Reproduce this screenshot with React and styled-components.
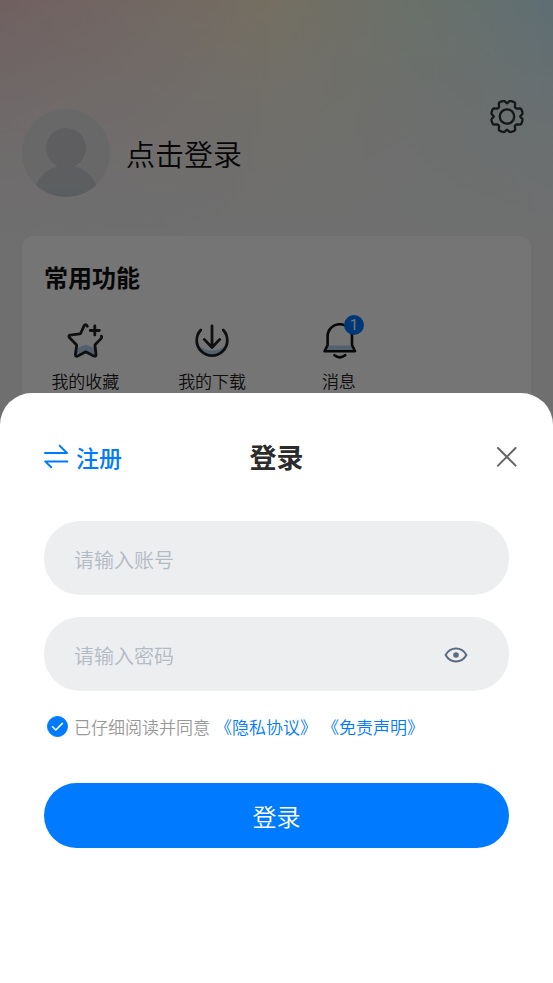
import React, { useState } from 'react';
import styled, { createGlobalStyle } from 'styled-components';

const FEATURES = [
    { key: 'favorite', label: '我的收藏', icon: <StarIcon /> },
    { key: 'download', label: '我的下载', icon: <DownloadIcon /> },
    { key: 'message', label: '消息', icon: <BellIcon />, count: 1 },
];

const App = () => {
    const [account, setAccount] = useState('');
    const [password, setPassword] = useState('');
    const [visible, setVisible] = useState(false);
    const [agreed, setAgreed] = useState(true);

    return (
        <>
            <GlobalStyle />
            <Page>
                <ProfileBar>
                    <ProfileButton type="button">
                        <Avatar />
                        <ProfileName>点击登录</ProfileName>
                    </ProfileButton>
                    <IconButton type="button" aria-label="设置">
                        <GearIcon />
                    </IconButton>
                </ProfileBar>
                <Card>
                    <CardTitle>常用功能</CardTitle>
                    <FeatureGrid>
                        {FEATURES.map((item) => (
                            <FeatureButton type="button" key={item.key}>
                                <FeatureIcon>
                                    {item.icon}
                                    {item.count && <Badge>{item.count}</Badge>}
                                </FeatureIcon>
                                {item.label}
                            </FeatureButton>
                        ))}
                    </FeatureGrid>
                </Card>
            </Page>
            <Mask>
                <Sheet role="dialog" aria-labelledby="sheet-title">
                    <SheetHeader>
                        <RegisterButton type="button">
                            <SwapIcon />
                            注册
                        </RegisterButton>
                        <SheetTitle id="sheet-title">登录</SheetTitle>
                        <CloseButton type="button" aria-label="关闭">
                            <CloseIcon />
                        </CloseButton>
                    </SheetHeader>
                    <Form onSubmit={(e) => e.preventDefault()}>
                        <Field>
                            <Input
                                aria-label="账号"
                                placeholder="请输入账号"
                                value={account}
                                onChange={(e) => setAccount(e.target.value)}
                            />
                        </Field>
                        <Field>
                            <Input
                                type={visible ? 'text' : 'password'}
                                aria-label="密码"
                                placeholder="请输入密码"
                                value={password}
                                onChange={(e) => setPassword(e.target.value)}
                            />
                            <IconButton type="button" aria-label="显示密码" onClick={() => setVisible(!visible)}>
                                <EyeIcon />
                            </IconButton>
                        </Field>
                        <Agreement>
                            <CheckSlot>
                                <Checkbox
                                    id="agree"
                                    type="checkbox"
                                    checked={agreed}
                                    onChange={(e) => setAgreed(e.target.checked)}
                                />
                                {agreed && <CheckIcon />}
                            </CheckSlot>
                            <label htmlFor="agree">已仔细阅读并同意</label>
                            <TermsLink href="#privacy">《隐私协议》</TermsLink>
                            <TermsLink href="#disclaimer">《免责声明》</TermsLink>
                        </Agreement>
                        <SubmitButton type="submit">登录</SubmitButton>
                    </Form>
                </Sheet>
            </Mask>
        </>
    );
};
export default App;

function Avatar() {
    return (
        <svg width="88" height="88" viewBox="0 0 88 88" aria-hidden="true">
            <defs>
                <clipPath id="avatar-clip">
                    <circle cx="44" cy="44" r="44" />
                </clipPath>
                <linearGradient id="avatar-body" x1="0" y1="0" x2="0" y2="1">
                    <stop offset="0" stopColor="#cccdd3" />
                    <stop offset="0.5" stopColor="#c6ccd1" />
                </linearGradient>
            </defs>
            <g clipPath="url(#avatar-clip)">
                <rect width="88" height="88" fill="#e4e3e4" />
                <circle cx="44" cy="39" r="20" fill="#cccdd3" />
                <path d="M34 54 Q37 57 33 59 L55 59 Q51 57 54 54Z" fill="#cccdd3" />
                <circle cx="44" cy="89" r="33" fill="url(#avatar-body)" />
            </g>
        </svg>
    );
}

// four pairs of rounded teeth: a narrow notch inside each pair, a wide one between pairs
function gearOutline(cx, cy, radius) {
    const points = [];
    for (let deg = 0; deg < 360; deg += 3) {
        const inPair = ((deg + 45) % 90) - 45;
        const between = (deg % 90) - 45;
        const r = radius - 2.8 * Math.exp(-((inPair / 7) ** 2)) - 3.8 * Math.exp(-((between / 11) ** 4));
        const rad = (deg * Math.PI) / 180;
        points.push(`${(cx + r * Math.cos(rad)).toFixed(2)} ${(cy + r * Math.sin(rad)).toFixed(2)}`);
    }
    return `M${points.join('L')}Z`;
}

function GearIcon() {
    return (
        <svg width="34" height="34" viewBox="0 0 34 34" fill="none" stroke="#303438" strokeWidth="2.3" strokeLinejoin="round" aria-hidden="true">
            <path d={gearOutline(17, 16.5, 16)} />
            <circle cx="17" cy="16.5" r="7.2" />
        </svg>
    );
}

function StarIcon() {
    return (
        <svg width="36" height="36" viewBox="0 0 36 36" fill="none" stroke="#222222" strokeWidth="2.8" strokeLinecap="round" strokeLinejoin="round" aria-hidden="true">
            <path d="M10.5 25 L18.5 21.5 L27.5 25 L28 31.5 L18.7 27.5 L9.5 31.5Z" fill="#b5d4f2" stroke="none" />
            <path d="M20.3 3.2 Q18.7 .2 17.2 2.6 L13.8 10 Q13.5 10.7 12.7 10.8 L3 12.2 Q1 12.8 2.4 14.6 L9.2 21.4 Q9.7 22 9.6 22.8 L8.4 31.6 Q8.5 34 10.8 33 L18.7 28.8 L26.8 33 Q29.2 33.8 29 31.4 L28 22.6 Q28 21.8 28.5 21.3 L34 15.6 Q35.2 14.2 34.4 13.2" />
            <path d="M27.8 3v9M23.3 7.5h9" />
        </svg>
    );
}

function DownloadIcon() {
    return (
        <svg width="36" height="36" viewBox="0 0 36 36" fill="none" stroke="#222222" strokeWidth="2.8" strokeLinecap="round" strokeLinejoin="round" aria-hidden="true">
            <path d="M3 19 Q7 27.5 18 27.5 T33 19 Q31 32.5 18 32.5 T3 19Z" fill="#b5d4f2" stroke="none" />
            <path d="M6.8 7 A15.3 15.3 0 1 0 29.2 7" />
            <path d="M18 3v21.5M10.3 16.4L18 24.5l7.7-8.1" />
        </svg>
    );
}

function BellIcon() {
    return (
        <svg width="36" height="36" viewBox="0 0 36 36" fill="none" stroke="#111111" strokeWidth="2.6" strokeLinecap="round" strokeLinejoin="round" aria-hidden="true">
            <path d="M7 22.5h24l2 4.5H5z" fill="#b5d4f2" stroke="none" />
            <path d="M3.6 28.2 L6.6 22 V13.4 A12.2 12.2 0 0 1 31 13.4 V22 L34 28.2Z" />
            <path d="M13.4 32.2 Q18.8 36.4 24.2 32.2" />
        </svg>
    );
}

function SwapIcon() {
    return (
        <svg width="26" height="26" viewBox="0 0 26 26" fill="none" stroke="currentColor" strokeWidth="2" strokeLinecap="round" strokeLinejoin="round" aria-hidden="true">
            <path d="M1 9h22L15.6 1.6M23.4 17.4H1.2l6 5.8" />
        </svg>
    );
}

function CloseIcon() {
    return (
        <svg width="20" height="20" viewBox="0 0 20 20" fill="none" stroke="#666666" strokeWidth="2" strokeLinecap="round" aria-hidden="true">
            <path d="M1 1l17.6 17.6M18.6 1L1 18.6" />
        </svg>
    );
}

function EyeIcon() {
    return (
        <svg width="24" height="16" viewBox="0 0 24 16" fill="none" stroke="#5c6c80" strokeWidth="2" strokeLinejoin="round" aria-hidden="true">
            <path d="M1.6 8 Q5.2 1.6 12 1.6 T22.4 8 Q18.8 14.4 12 14.4 T1.6 8Z" />
            <circle cx="12" cy="8" r="2.8" fill="#5c6c80" stroke="none" />
        </svg>
    );
}

function CheckIcon() {
    return (
        <svg width="21" height="21" viewBox="0 0 21 21" fill="none" stroke="#ffffff" strokeWidth="1.6" strokeLinecap="round" strokeLinejoin="round" aria-hidden="true">
            <path d="M5.6 10.8l3.2 3.2 6.6-6.6" />
        </svg>
    );
}

const GlobalStyle = createGlobalStyle`
    * {
        box-sizing: border-box;
    }
    body {
        margin: 0;
        background: #f1f1f2;
        font-family: 'Noto Sans CJK SC', sans-serif;
        font-weight: 350;
    }
    button {
        padding: 0;
        border: none;
        background: none;
        color: inherit;
        font-family: inherit;
        font-weight: inherit;
        cursor: pointer;
    }
`;
const Page = styled.main`
    min-height: 100vh;
    padding: 0 22px;
    background:
        linear-gradient(
            to bottom,
            rgba(241, 241, 242, 0) 0,
            rgba(241, 241, 242, 0.45) 80px,
            rgba(241, 241, 242, 0.78) 150px,
            #f1f1f2 240px
        ),
        linear-gradient(to right, #f5d1d2 0%, #f9e1d6 25%, #fdf1d4 49%, #ebf3e3 70%, #daf3ef 88%, #cdf0fc 100%);
`;
const ProfileBar = styled.header`
    display: flex;
    justify-content: space-between;
    align-items: flex-start;
    padding: 100px 7px 39px 0;
`;
const ProfileButton = styled.button`
    display: flex;
    align-items: center;
    gap: 16px;
    padding-top: 9px;
`;
const ProfileName = styled.span`
    color: #111111;
    font-size: 29px;
    line-height: 40px;
`;
const IconButton = styled.button`
    display: flex;
    flex-shrink: 0;
`;
const Card = styled.section`
    padding: 22px 0;
    border-radius: 12px;
    background: #ffffff;
`;
const CardTitle = styled.h2`
    margin: 0 0 27px;
    padding-left: 22px;
    color: #111111;
    font-size: 24px;
    font-weight: 700;
    line-height: 38px;
`;
const FeatureGrid = styled.div`
    display: grid;
    grid-template-columns: repeat(4, 1fr);
    padding-right: 2px;
`;
const FeatureButton = styled.button`
    display: flex;
    flex-direction: column;
    align-items: center;
    gap: 10px;
    color: #222222;
    font-size: 17px;
    line-height: 24px;
`;
const FeatureIcon = styled.span`
    position: relative;
    display: flex;
`;
const Badge = styled.span`
    position: absolute;
    top: -8px;
    right: -7px;
    min-width: 20px;
    height: 20px;
    border-radius: 10px;
    background: #007aff;
    color: #ffffff;
    font-family: Roboto, sans-serif;
    font-size: 15px;
    font-weight: 400;
    line-height: 20px;
    text-align: center;
`;
const Mask = styled.div`
    position: fixed;
    inset: 0;
    display: flex;
    align-items: flex-end;
    background: rgba(0, 0, 0, 0.54);
`;
const Sheet = styled.section`
    width: 100%;
    padding: 43px 44px 135px;
    border-radius: 32px 32px 0 0;
    background: #ffffff;
`;
const SheetHeader = styled.header`
    display: grid;
    grid-template-columns: 1fr auto 1fr;
    align-items: center;
    height: 42px;
    margin: 0 -8px 43px;
`;
const RegisterButton = styled.button`
    display: flex;
    align-items: center;
    justify-self: start;
    gap: 6px;
    padding-left: 8px;
    color: #007aff;
    font-size: 23px;
    font-weight: 500;
    line-height: 36px;
`;
const SheetTitle = styled.h1`
    margin: 0;
    color: #2b2b2b;
    font-size: 27px;
    font-weight: 700;
    line-height: 40px;
`;
const CloseButton = styled(IconButton)`
    justify-self: end;
`;
const Form = styled.form`
    display: flex;
    flex-direction: column;
`;
const Field = styled.div`
    display: flex;
    align-items: center;
    height: 74px;
    margin-bottom: 22px;
    padding: 2px 41px 0 30px;
    border-radius: 36px;
    background: #edeef0;
`;
const Input = styled.input`
    flex: 1;
    min-width: 0;
    height: 40px;
    padding: 0;
    border: none;
    outline: none;
    background: transparent;
    color: #222222;
    font-family: inherit;
    font-size: 20px;
    font-weight: inherit;

    &::placeholder {
        color: #b2bac3;
        opacity: 1;
    }
`;
const Agreement = styled.div`
    display: flex;
    align-items: center;
    height: 26px;
    margin-bottom: 44px;
    padding-left: 3px;
    color: #999999;
    font-size: 17px;
    white-space: nowrap;
`;
const CheckSlot = styled.span`
    display: grid;
    margin-right: 6px;

    > * {
        grid-area: 1 / 1;
    }
    > svg {
        pointer-events: none;
    }
`;
const Checkbox = styled.input`
    appearance: none;
    width: 21px;
    height: 21px;
    margin: 0;
    border: 1px solid #b2bac3;
    border-radius: 50%;
    cursor: pointer;

    &:checked {
        border-color: #007aff;
        background: #007aff;
    }
`;
const TermsLink = styled.a`
    margin-left: 5px;
    color: #007aff;
    text-decoration: none;
`;
const SubmitButton = styled.button`
    height: 65px;
    border-radius: 33px;
    background: #007aff;
    color: #ffffff;
    font-size: 24px;
`;
